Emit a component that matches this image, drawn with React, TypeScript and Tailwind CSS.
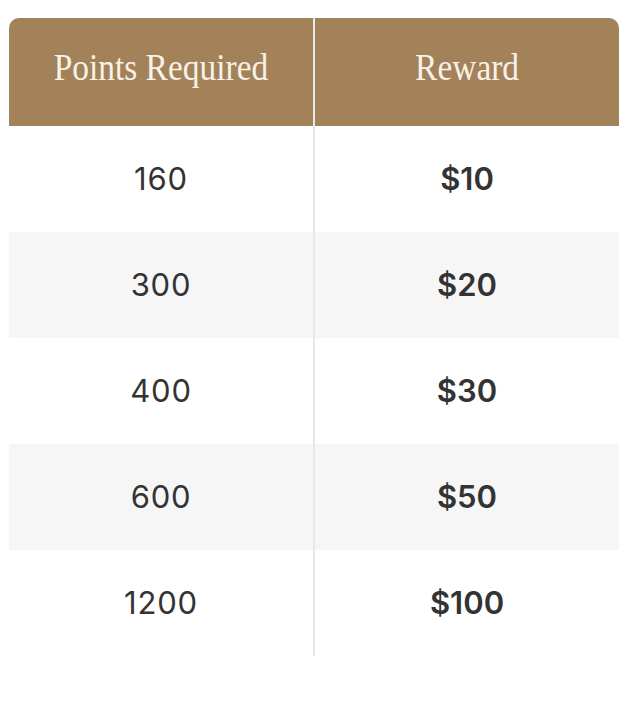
const rows = [
  { points: "160", reward: "$10" },
  { points: "300", reward: "$20" },
  { points: "400", reward: "$30" },
  { points: "600", reward: "$50" },
  { points: "1200", reward: "$100" },
];

export default function App() {
  return (
    <div className="min-h-screen bg-white pt-[18px] pl-[9px] pr-[9px]">
      <div className="grid grid-cols-[306px_304px] w-[610px]">
        <div className="h-[108px] bg-[#a3825a] rounded-tl-[10px] border-r-2 border-[#e8e8e8] flex items-center justify-center pb-[10px]">
          <span className="text-[38px] text-[#f7f1e8] font-['Liberation_Serif',serif] scale-x-[0.88] whitespace-nowrap">
            Points Required
          </span>
        </div>
        <div className="h-[108px] bg-[#a3825a] rounded-tr-[10px] flex items-center justify-center pb-[10px]">
          <span className="text-[38px] text-[#f7f1e8] font-['Liberation_Serif',serif] scale-x-[0.88] whitespace-nowrap">
            Reward
          </span>
        </div>
        {rows.map((r, i) => (
          <Row key={r.points} points={r.points} reward={r.reward} shaded={i % 2 === 1} />
        ))}
      </div>
    </div>
  );
}

function Row({ points, reward, shaded }: { points: string; reward: string; shaded: boolean }) {
  const bg = shaded ? "bg-[#f6f6f6]" : "bg-white";
  return (
    <>
      <div className={`h-[106px] ${bg} border-r-2 border-[#e8e8e8] flex items-center justify-center`}>
        <span className="text-[31px] text-[#333333] font-['Inter',sans-serif] font-normal tracking-[0.8px]">
          {points}
        </span>
      </div>
      <div className={`h-[106px] ${bg} flex items-center justify-center`}>
        <span className="text-[31px] text-[#333333] font-['Inter',sans-serif] font-semibold">
          {reward}
        </span>
      </div>
    </>
  );
}
